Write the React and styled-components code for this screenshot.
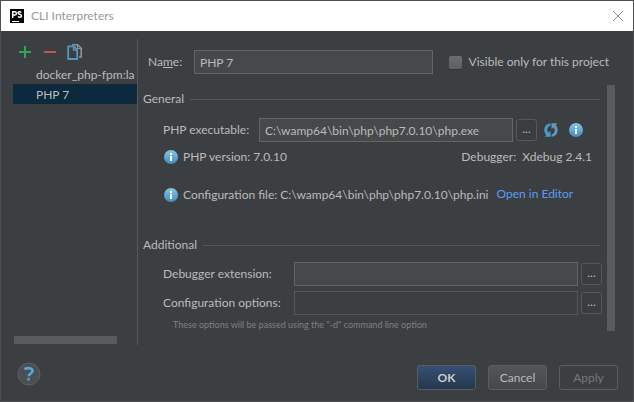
import React from 'react';
import styled, { createGlobalStyle, css } from 'styled-components';

const GlobalStyle = createGlobalStyle`
  *, *::before, *::after { box-sizing: border-box; }
  body { margin: 0; background: #3c3f41; }
  button, input { font: inherit; color: inherit; margin: 0; }
`;

const Dialog = styled.div`
  display: flex;
  flex-direction: column;
  min-height: 100vh;
  border: 1px solid #4d5052;
  background: #3c3f41;
  color: #bbbbbb;
  font: 12px/16px Lato, 'Open Sans', sans-serif;
`;

const TitleBar = styled.header`
  display: flex;
  align-items: center;
  gap: 7px;
  height: 30px;
  padding: 0 9px;
  background: #ffffff;
  color: #999999;
`;

const Title = styled.h1`
  flex: 1;
  margin: 0;
  font-size: 12px;
  font-weight: 400;
`;

const IconButton = styled.button`
  display: flex;
  align-items: center;
  justify-content: center;
  flex: none;
  padding: 0;
  border: 0;
  background: none;
`;

const Body = styled.div`
  display: flex;
  flex: 1;
  padding: 8px 16px 0 12px;
`;

const Sidebar = styled.aside`
  display: flex;
  flex-direction: column;
  flex: 0 0 125px;
  min-width: 0;
  border-right: 1px solid #555758;
`;

const Toolbar = styled.div`
  display: flex;
  align-items: center;
  gap: 9px;
  height: 25px;
  padding-left: 4px;
`;

const List = styled.ul`
  flex: 1;
  margin: 0;
  padding: 0;
  list-style: none;
  overflow: hidden;
`;

const Item = styled.li`
  height: 20px;
  padding: 1px 0 0 23px;
  line-height: 20px;
  white-space: nowrap;
  background: ${p => (p.$selected ? '#0d293e' : 'transparent')};
`;

const HorizontalBar = styled.div`
  width: 103px;
  height: 8px;
  margin: 0 0 1px 1px;
  background: #5a5b5c;
`;

const VerticalBar = styled.div`
  flex: 0 0 8px;
  background: #5a5b5c;
`;

const Panel = styled.main`
  flex: 1;
  min-width: 0;
  padding: 11px 2px 13px 5px;
`;

const NameRow = styled.div`
  display: flex;
  align-items: center;
  padding: 0 6px 0 5px;
`;

const Field = styled.input`
  flex: 1;
  min-width: 0;
  height: 24px;
  padding: 0 5px;
  border: 1px solid #646464;
  border-radius: 0;
  outline: 0;
  background: #45494a;
  &:disabled {
    background: transparent;
    border-color: #555758;
  }
`;

const NameLabel = styled.label`
  flex: 0 0 46px;
`;

const CheckLabel = styled.label`
  display: flex;
  align-items: center;
  gap: 7px;
  margin-left: 16px;
  white-space: nowrap;
`;

const Check = styled.input`
  appearance: none;
  width: 13px;
  height: 13px;
  border-radius: 2px;
  background: linear-gradient(#6c6c6c, #606060);
  box-shadow: 0 1px 0 #333536;
`;

const ScrollArea = styled.div`
  display: flex;
  gap: 5px;
  margin-top: 11px;
`;

const Form = styled.div`
  flex: 1;
  min-width: 0;
  padding-top: 6px;
`;

const Section = styled.section`
  margin-top: 34px;
`;

const Heading = styled.h2`
  display: flex;
  align-items: center;
  gap: 6px;
  margin: 0 2px 0 0;
  font-size: 12px;
  font-weight: 400;
  &::after {
    content: '';
    flex: 1;
    height: 1px;
    background: #555758;
  }
`;

const Row = styled.div`
  display: flex;
  align-items: center;
  gap: 3px;
  height: 24px;
  margin-top: ${p => p.$gap}px;
  padding-left: 20px;
  padding-right: ${p => p.$inset || 0}px;
`;

const RowLabel = styled.label`
  flex: 0 0 ${p => p.$width}px;
  white-space: nowrap;
`;

const BrowseButton = styled.button`
  flex: none;
  width: 21px;
  height: 22px;
  padding: 0 0 3px;
  border: 1px solid #56595a;
  border-radius: 3px;
  background: #3a3d3e;
  line-height: 16px;
`;

const Actions = styled.div`
  display: flex;
  gap: 10px;
  margin-left: 4px;
`;

const InfoRow = styled.div`
  display: flex;
  align-items: center;
  gap: 4px;
  height: 16px;
  margin-top: ${p => p.$gap}px;
  padding: 0 10px 0 20px;
  white-space: nowrap;
`;

const Debugger = styled.span`
  margin-left: auto;
`;

const EditorLink = styled.a`
  align-self: flex-start;
  margin-left: 4px;
  line-height: 14px;
  color: #589df6;
  text-decoration: none;
`;

const Hint = styled.p`
  margin: 4px 0 0;
  padding-left: 30px;
  font-size: 9px;
  line-height: 12px;
  color: #808080;
`;

const Footer = styled.footer`
  display: flex;
  align-items: flex-end;
  gap: 12px;
  padding: 17px 15px 11px 16px;
`;

const HelpButton = styled(IconButton)`
  margin: 0 auto 4px 0;
`;

const variants = {
  primary: css`
    background: linear-gradient(#365074, #25374f);
    color: #cccccc;
    font-weight: 700;
  `,
  normal: css`
    background: linear-gradient(#525658, #444849);
  `,
  disabled: css`
    background: transparent;
    color: #777777;
  `,
};

const DialogButton = styled.button`
  width: 59px;
  height: 25px;
  padding: 0;
  border: 1px solid #5a5d5f;
  border-radius: 3px;
  ${p => variants[p.$variant]}
`;

const InfoIcon = () => (
  <svg width="16" height="16" viewBox="0 0 16 16" aria-hidden="true">
    <defs>
      <linearGradient id="info" x2="0" y2="1">
        <stop offset="0" stopColor="#8cc4e2" />
        <stop offset="1" stopColor="#3c8fc0" />
      </linearGradient>
    </defs>
    <circle cx="8" cy="8" r="7" fill="url(#info)" />
    <path d="M7 4h2v2H7zM7 7h2v5H7z" fill="#fff" />
  </svg>
);

const RefreshIcon = () => (
  <svg width="14" height="16" viewBox="0 0 14 16" aria-hidden="true">
    <path d="M6.500 1.200C3 1.400.3 4.300.3 8c0 2 .8 3.700 2 4.900L.5 14.800h6V8.800l-2 2C2.600 8.800 2.700 4.700 6.500 3.400z" fill="#4a9bcb" />
    <path d="M7.500 14.800c3.500-.2 6.200-3.100 6.200-6.800 0-2-.8-3.700-2-4.900l1.800-1.900h-6v6l2-2c1.900 2 1.800 6.100-2 7.400z" fill="#6099bb" />
  </svg>
);

const CopyIcon = () => (
  <svg width="16" height="18" viewBox="0 0 16 18" fill="none" aria-hidden="true">
    <path d="M5 1.800h5.700l3.500 3.500V14H12" stroke="#929292" strokeWidth="1.600" />
    <path d="M10.500 2V5.500h3.500" stroke="#929292" strokeWidth="1.200" />
    <path d="M1.200 3.300h5.500l3.500 3.500v9.200H1.200z" fill="#3c3f41" stroke="#5795bf" strokeWidth="1.800" />
    <path d="M6.500 3.500V7H10" stroke="#5795bf" strokeWidth="1.300" />
  </svg>
);

const Logo = () => (
  <svg width="14" height="14" viewBox="0 0 14 14" aria-hidden="true">
    <rect width="14" height="14" fill="#000" />
    <path d="M2.700 9V2.700h2a1.600 1.600 0 0 1 0 3.400h-2M11.300 3.500c-1.200-1-3.200-.9-3.200.5 0 1.700 3.400.9 3.400 2.800 0 1.600-2.300 1.900-3.600.7" fill="none" stroke="#fff" strokeWidth="1.500" />
    <path d="M2 12.500h7" stroke="#fff" strokeWidth="1" />
  </svg>
);

export default function App() {
  return (
    <>
      <GlobalStyle />
      <Dialog role="dialog" aria-labelledby="title">
        <TitleBar>
          <Logo />
          <Title id="title">CLI Interpreters</Title>
          <IconButton type="button" aria-label="Close">
            <svg width="12" height="12" viewBox="0 0 12 12" aria-hidden="true">
              <path d="M1 1l10 10M11 1L1 11" stroke="#8f8f8f" />
            </svg>
          </IconButton>
        </TitleBar>
        <Body>
          <Sidebar>
            <Toolbar>
              <IconButton type="button" aria-label="Add">
                <svg width="16" height="16" viewBox="0 0 16 16" aria-hidden="true">
                  <path d="M8 2v12M2 8h12" stroke="#2fa84f" strokeWidth="2" />
                </svg>
              </IconButton>
              <IconButton type="button" aria-label="Remove">
                <svg width="16" height="16" viewBox="0 0 16 16" aria-hidden="true">
                  <path d="M2 8h12" stroke="#c75450" strokeWidth="2" />
                </svg>
              </IconButton>
              <IconButton type="button" aria-label="Copy"><CopyIcon /></IconButton>
            </Toolbar>
            <List>
              <Item>docker_php-fpm:la</Item>
              <Item $selected>PHP 7</Item>
            </List>
            <HorizontalBar />
          </Sidebar>
          <Panel>
            <NameRow>
              <NameLabel htmlFor="name">Na<u>m</u>e:</NameLabel>
              <Field id="name" defaultValue="PHP 7" />
              <CheckLabel>
                <Check type="checkbox" />
                Visible only for this project
              </CheckLabel>
            </NameRow>
            <ScrollArea>
              <Form>
                <Heading>General</Heading>
                <Row $gap={11} $inset={18}>
                  <RowLabel htmlFor="exe" $width={93}>PHP executable:</RowLabel>
                  <Field id="exe" defaultValue="C:\wamp64\bin\php\php7.0.10\php.exe" />
                  <BrowseButton type="button" aria-label="Browse executable">...</BrowseButton>
                  <Actions>
                    <IconButton type="button" aria-label="Reload"><RefreshIcon /></IconButton>
                    <IconButton type="button" aria-label="Information"><InfoIcon /></IconButton>
                  </Actions>
                </Row>
                <InfoRow $gap={7}>
                  <InfoIcon />
                  <span>PHP version: 7.0.10</span>
                  <Debugger>Debugger: &nbsp;Xdebug 2.4.1</Debugger>
                </InfoRow>
                <InfoRow $gap={22}>
                  <InfoIcon />
                  <span>Configuration file: C:\wamp64\bin\php\php7.0.10\php.ini</span>
                  <EditorLink href="#editor">Open in Editor</EditorLink>
                </InfoRow>
                <Section>
                  <Heading>Additional</Heading>
                  <Row $gap={9}>
                    <RowLabel htmlFor="ext" $width={128}>Debugger extension:</RowLabel>
                    <Field id="ext" />
                    <BrowseButton type="button" aria-label="Browse extension">...</BrowseButton>
                  </Row>
                  <Row $gap={5}>
                    <RowLabel htmlFor="opts" $width={128}>Configuration options:</RowLabel>
                    <Field id="opts" disabled />
                    <BrowseButton type="button" aria-label="Edit options">...</BrowseButton>
                  </Row>
                  <Hint>These options will be passed using the "-d" command line option</Hint>
                </Section>
              </Form>
              <VerticalBar />
            </ScrollArea>
          </Panel>
        </Body>
        <Footer>
          <HelpButton type="button" aria-label="Help">
            <svg width="24" height="24" viewBox="0 0 24 24" fill="none" aria-hidden="true">
              <circle cx="12" cy="12" r="11" fill="#4b4f51" stroke="#5e6162" />
              <path d="M7.500 7.200c3-1.800 8-1.400 8 1.600 0 2.800-3.700 2.600-3.700 5.400" stroke="#5aa7d6" strokeWidth="2.600" />
              <circle cx="11.500" cy="17.200" r="1.600" fill="#4a97c8" />
            </svg>
          </HelpButton>
          <DialogButton type="button" $variant="primary">OK</DialogButton>
          <DialogButton type="button" $variant="normal">Cancel</DialogButton>
          <DialogButton type="button" disabled $variant="disabled">Apply</DialogButton>
        </Footer>
      </Dialog>
    </>
  );
}
